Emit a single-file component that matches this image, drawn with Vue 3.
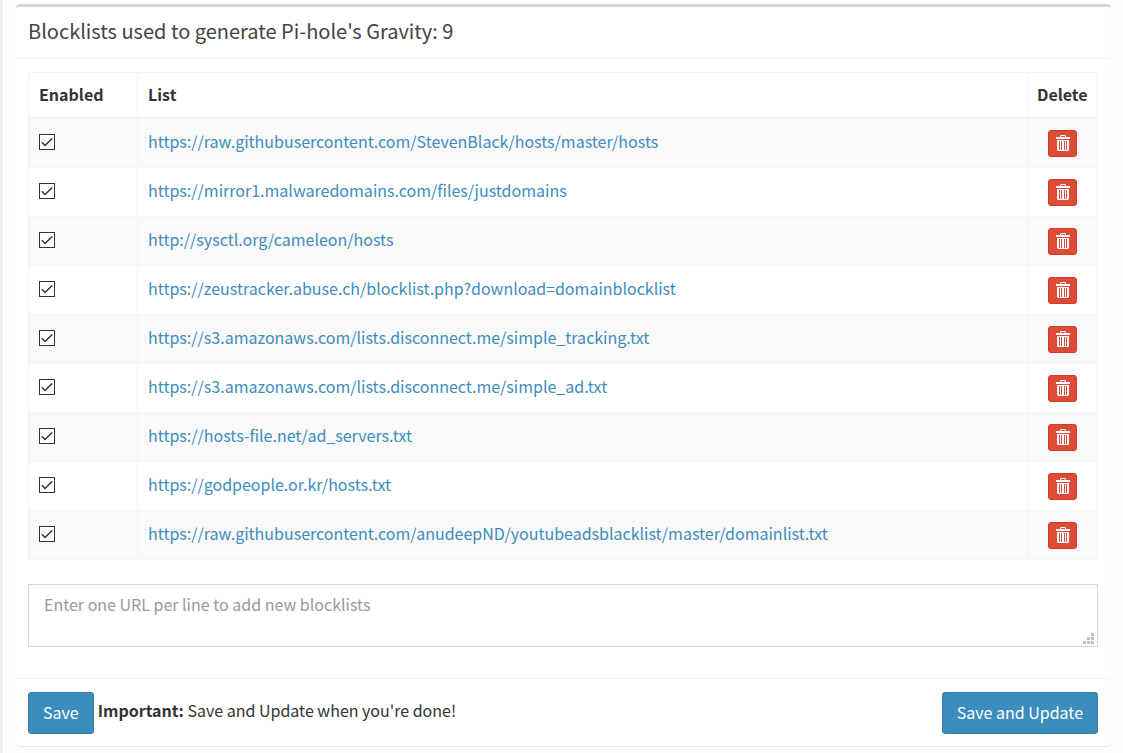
<script setup>
import { ref } from 'vue'

const lists = ref([
  'https://raw.githubusercontent.com/StevenBlack/hosts/master/hosts',
  'https://mirror1.malwaredomains.com/files/justdomains',
  'http://sysctl.org/cameleon/hosts',
  'https://zeustracker.abuse.ch/blocklist.php?download=domainblocklist',
  'https://s3.amazonaws.com/lists.disconnect.me/simple_tracking.txt',
  'https://s3.amazonaws.com/lists.disconnect.me/simple_ad.txt',
  'https://hosts-file.net/ad_servers.txt',
  'https://godpeople.or.kr/hosts.txt',
  'https://raw.githubusercontent.com/anudeepND/youtubeadsblacklist/master/domainlist.txt'
].map(url => ({ url, enabled: true })))

const newLists = ref('')

function remove(index) {
  lists.value.splice(index, 1)
}
</script>

<template>
  <main class="page">
    <form class="box" @submit.prevent>
      <header class="box-header">
        <h3>Blocklists used to generate Pi-hole's Gravity: {{ lists.length }}</h3>
      </header>
      <div class="box-body">
        <table>
          <thead>
            <tr>
              <th class="col-enabled">Enabled</th>
              <th>List</th>
              <th class="col-delete">Delete</th>
            </tr>
          </thead>
          <tbody>
            <tr v-for="(item, i) in lists" :key="item.url">
              <td class="cell-enabled">
                <span class="check">
                  <input v-model="item.enabled" type="checkbox" :aria-label="'Enable ' + item.url">
                  <svg v-if="item.enabled" viewBox="0 0 16 16" aria-hidden="true"><path d="M2.8 8.3 6 11.5 13.2 4.5" /></svg>
                </span>
              </td>
              <td class="cell-url"><a :href="item.url">{{ item.url }}</a></td>
              <td class="cell-delete">
                <button type="button" class="btn-delete" :aria-label="'Delete ' + item.url" @click="remove(i)">
                  <svg viewBox="0 0 14 16" aria-hidden="true">
                    <path fill-rule="evenodd" d="M4 2V1L5 0H9L10 1V2H14V4H0V2ZM5 2H9V1H5Z" />
                    <path fill-rule="evenodd" d="M1 5H13V15L12 16H2L1 15ZM3 6V15H4V6ZM5 6V15H6V6ZM8 6V15H9V6ZM10 6V15H11V6Z" />
                  </svg>
                </button>
              </td>
            </tr>
          </tbody>
        </table>
        <div class="field">
          <textarea v-model="newLists" aria-label="New blocklists" placeholder="Enter one URL per line to add new blocklists"></textarea>
          <svg class="grip" viewBox="0 0 11 11" aria-hidden="true">
            <path d="M8 0h3v3h-3zM4 4h3v3h-3zM8 4h3v3h-3zM0 8h3v3h-3zM4 8h3v3h-3zM8 8h3v3h-3z" />
          </svg>
        </div>
      </div>
      <footer class="box-footer">
        <button type="submit" class="btn">Save</button>
        <p><strong>Important:</strong> Save and Update when you're done!</p>
        <button type="submit" class="btn btn-update">Save and Update</button>
      </footer>
    </form>
  </main>
</template>

<style>
body {
  margin: 0;
  background: #fdfdfd;
}
</style>

<style scoped>
* {
  box-sizing: border-box;
}
.page {
  min-height: 100vh;
  padding: 4px 12px 6px 13px;
  border-left: 3px solid #ecf0f5;
  background: #fefefe;
  color: #333;
  font: 16px/24px "Noto Sans CJK SC", "Open Sans", sans-serif;
}
.box {
  border-top: 3px solid #d2d6de;
  border-radius: 4px;
  background: #fff;
  box-shadow: 0 1px 1px rgba(0, 0, 0, 0.1);
}
.box-header {
  padding: 10px 12px 14px;
  border-bottom: 1px solid #f4f4f4;
}
h3 {
  margin: 0;
  font-size: 20px;
  line-height: 27px;
  font-weight: 400;
  color: #444;
}
.box-body {
  padding: 13px 13px 31px 12px;
}
table {
  width: 100%;
  border-collapse: separate;
  border-spacing: 0;
  border-top: 1px solid #f4f4f4;
  border-left: 1px solid #f4f4f4;
}
th,
td {
  border-right: 1px solid #f4f4f4;
  border-bottom: 1px solid #f4f4f4;
  padding: 10px;
  text-align: left;
}
th {
  height: 46px;
  padding-top: 8px;
  border-bottom-width: 2px;
}
td {
  height: 49px;
}
.cell-enabled {
  padding-bottom: 12px;
}
.cell-url {
  padding-top: 8px;
  padding-bottom: 12px;
}
tbody tr:nth-child(odd) {
  background: #f9f9f9;
}
.col-enabled {
  width: 109px;
}
.col-delete {
  width: 70px;
  padding-left: 9px;
  padding-right: 9px;
}
a {
  color: #3c8dbc;
  text-decoration: none;
}
.check {
  position: relative;
  display: block;
  width: 16px;
  height: 16px;
}
.check input {
  appearance: none;
  display: block;
  width: 16px;
  height: 16px;
  margin: 0;
  border: 1px solid #333;
  background: #fff;
}
.check svg {
  position: absolute;
  inset: 0;
  fill: none;
  stroke: #333;
  stroke-width: 1.5;
  pointer-events: none;
}
.btn-delete {
  display: flex;
  align-items: center;
  justify-content: center;
  width: 29px;
  height: 27px;
  margin: 0 auto;
  padding: 0;
  border: 1px solid #d73925;
  border-radius: 3px;
  background: #dd4b39;
}
.btn-delete svg {
  width: 14px;
  height: 16px;
  fill: #fff;
}
.field {
  position: relative;
  margin-top: 24px;
}
textarea {
  display: block;
  width: 100%;
  height: 63px;
  padding: 7px 15px;
  border: 1px solid #d2d6de;
  border-radius: 0;
  background: #fff;
  color: #555;
  font: inherit;
  resize: none;
}
textarea::placeholder {
  color: #999;
  opacity: 1;
}
.grip {
  position: absolute;
  right: 4px;
  bottom: 3px;
  width: 11px;
  height: 11px;
  fill: #bfbfbf;
}
.box-footer {
  display: flex;
  align-items: center;
  gap: 4px;
  padding: 13px 13px 12px 12px;
  border-top: 1px solid #f4f4f4;
}
.box-footer p {
  margin: 0;
  padding-bottom: 6px;
}
.btn {
  height: 42px;
  padding: 0 14px 2px;
  border: 1px solid #367fa9;
  border-radius: 3px;
  background: #3c8dbc;
  color: #fff;
  font: inherit;
}
.btn-update {
  margin-left: auto;
}
</style>
